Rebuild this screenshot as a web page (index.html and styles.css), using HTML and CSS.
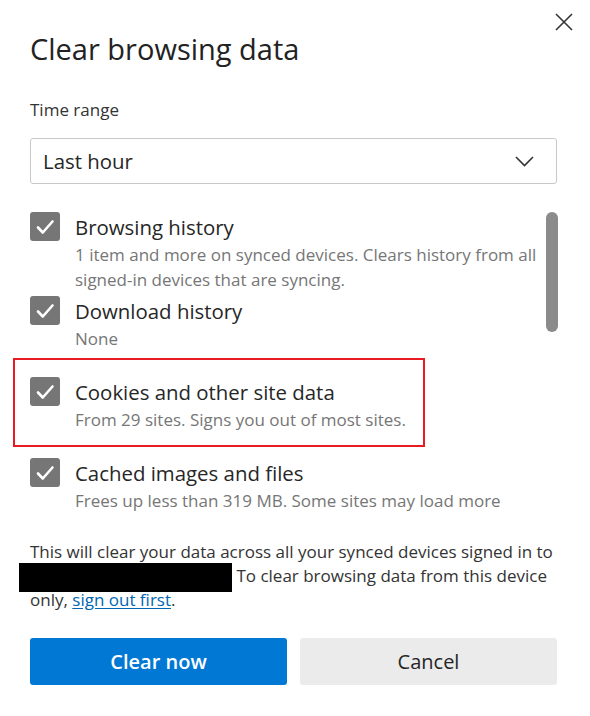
FILE: index.html
```html
<!DOCTYPE html>
<html lang="en">
<head>
<meta charset="utf-8">
<title>Clear browsing data</title>
<link rel="stylesheet" href="styles.css">
</head>
<body>
<div class="dialog">
  <div class="header">
    <h1 class="title">Clear browsing data</h1>
    <button class="close" aria-label="Close">
      <svg width="18" height="18" viewBox="0 0 18 18"><path d="M1 1L17 17M17 1L1 17" stroke="#333" stroke-width="1.6" fill="none"/></svg>
    </button>
  </div>

  <div class="field-label">Time range</div>
  <div class="select">
    <span class="select-value">Last hour</span>
    <svg class="chevron" width="19" height="11" viewBox="0 0 19 11"><path d="M1 1L9.5 9.5L18 1" stroke="#333" stroke-width="1.6" fill="none"/></svg>
  </div>

  <div class="list-wrap">
    <div class="list">
      <div class="row">
        <span class="check"><svg width="30" height="30" viewBox="0 0 30 30"><path d="M8 15.5L12.8 20.5L22.5 9.5" stroke="#fff" stroke-width="2.6" fill="none" stroke-linecap="round" stroke-linejoin="round"/></svg></span>
        <div class="row-text">
          <div class="row-label">Browsing history</div>
          <div class="row-sub">1 item and more on synced devices. Clears history from all signed-in devices that are syncing.</div>
        </div>
      </div>
      <div class="row">
        <span class="check"><svg width="30" height="30" viewBox="0 0 30 30"><path d="M8 15.5L12.8 20.5L22.5 9.5" stroke="#fff" stroke-width="2.6" fill="none" stroke-linecap="round" stroke-linejoin="round"/></svg></span>
        <div class="row-text">
          <div class="row-label">Download history</div>
          <div class="row-sub">None</div>
        </div>
      </div>
      <div class="row highlighted">
        <span class="highlight"></span>
        <span class="check"><svg width="30" height="30" viewBox="0 0 30 30"><path d="M8 15.5L12.8 20.5L22.5 9.5" stroke="#fff" stroke-width="2.6" fill="none" stroke-linecap="round" stroke-linejoin="round"/></svg></span>
        <div class="row-text">
          <div class="row-label">Cookies and other site data</div>
          <div class="row-sub">From 29 sites. Signs you out of most sites.</div>
        </div>
      </div>
      <div class="row last">
        <span class="check"><svg width="30" height="30" viewBox="0 0 30 30"><path d="M8 15.5L12.8 20.5L22.5 9.5" stroke="#fff" stroke-width="2.6" fill="none" stroke-linecap="round" stroke-linejoin="round"/></svg></span>
        <div class="row-text">
          <div class="row-label">Cached images and files</div>
          <div class="row-sub">Frees up less than 319 MB. Some sites may load more</div>
        </div>
      </div>
    </div>
    <div class="scrollbar"><div class="thumb"></div></div>
  </div>

  <p class="note">This will clear your data across all your synced devices signed in to <span class="redacted"></span> To clear browsing data from this device only, <a href="#" class="link">sign out first</a>.</p>

  <div class="actions">
    <button class="btn primary">Clear now</button>
    <button class="btn secondary">Cancel</button>
  </div>
</div>
</body>
</html>
```

FILE: styles.css
```css
* { box-sizing: border-box; }
html, body {
  margin: 0;
  padding: 0;
  background: #ffffff;
}
body {
  font-family: "Segoe UI", "Open Sans", "Noto Sans", sans-serif;
  color: #333333;
}
.dialog {
  width: 590px;
  height: 716px;
  padding: 0 33px 0 30px;
  overflow: hidden;
}
.header {
  display: flex;
  justify-content: space-between;
  align-items: flex-start;
}
.title {
  margin: 31px 0 0 0;
  font-size: 29px;
  line-height: 36px;
  font-weight: 400;
  color: #222222;
}
.close {
  margin: 13px -16px 0 0;
  padding: 0;
  border: 0;
  background: transparent;
  width: 18px;
  height: 18px;
  display: flex;
}
.field-label {
  margin-top: 31px;
  font-size: 17px;
  line-height: 24px;
  color: #333333;
}
.select {
  margin-top: 16px;
  height: 46px;
  border: 1px solid #c8c8c8;
  border-radius: 3px;
  display: flex;
  align-items: center;
  justify-content: space-between;
  padding: 0 22px 0 12px;
}
.select-value {
  font-size: 20.4px;
  color: #262626;
}
.chevron { display: block; }
.list-wrap {
  margin-top: 28px;
  height: 299px;
  display: flex;
  gap: 6px;
}
.list {
  flex: 1;
}
.scrollbar {
  width: 12px;
  margin-right: -1px;
}
.thumb {
  width: 12px;
  height: 120px;
  border-radius: 6px;
  background: #8b8b8b;
}
.row {
  display: flex;
  gap: 15px;
  min-height: 81px;
  align-items: flex-start;
}
.row:first-child { min-height: 84px; }
.row.last { min-height: 0; }
.highlighted { position: relative; }
.highlight {
  position: absolute;
  left: -17px;
  top: -19px;
  width: 412px;
  height: 89px;
  border: 2px solid #e81b23;
  pointer-events: none;
}
.check {
  flex: none;
  width: 30px;
  height: 29px;
  border-radius: 3px;
  background: #767676;
  display: flex;
  align-items: center;
  justify-content: center;
}
.check svg { display: block; }
.row-text { flex: 1; }
.row-label {
  font-size: 20.4px;
  line-height: 30px;
  color: #262626;
}
.row-sub {
  font-size: 17px;
  line-height: 25px;
  color: #767676;
}
.note {
  margin: 29px 0 0 0;
  font-size: 17px;
  line-height: 24px;
  color: #333333;
}
.redacted {
  display: inline-block;
  vertical-align: top;
  width: 213px;
  height: 29px;
  margin: -1px 0 -4px -11px;
  background: #000000;
}
.link {
  color: #0066b4;
  text-decoration: underline;
  text-underline-offset: 2px;
}
.actions {
  margin-top: 26px;
  display: flex;
  gap: 13px;
}
.btn {
  flex: 1;
  height: 47px;
  border: 0;
  border-radius: 3px;
  font-family: inherit;
  font-size: 20px;
}
.primary {
  background: #0078d4;
  color: #ffffff;
  font-weight: 600;
}
.secondary {
  background: #ebebeb;
  color: #262626;
  font-weight: 400;
}
```
